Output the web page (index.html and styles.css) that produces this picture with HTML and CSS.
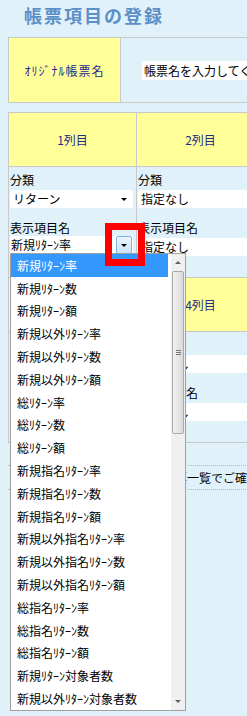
FILE: index.html
```html
<!DOCTYPE html>
<html>
<head>
  <link rel="stylesheet" href="styles.css">
</head>
<body>
  <div class="page">
    <h1 class="title">帳票項目の登録</h1>

    <!-- 帳票名 -->
    <div class="name-table">
      <div class="name-label">ｵﾘｼﾞﾅﾙ帳票名</div>
      <div class="name-field">
        <div class="text-input">帳票名を入力してください</div>
      </div>
    </div>

    <!-- 列の設定 -->
    <div class="columns">
      <div class="col-head">1列目</div>
      <div class="col-head">2列目</div>

      <div class="col-body">
        <div class="field-label">分類</div>
        <div class="select"><span>リターン</span><i class="caret"></i></div>
        <div class="field-label label-gap">表示項目名</div>
        <div class="select open"><span>新規ﾘﾀｰﾝ率</span><i class="drop-btn"><i class="caret"></i></i></div>
      </div>
      <div class="col-body">
        <div class="field-label">分類</div>
        <div class="select"><span>指定なし</span><i class="caret"></i></div>
        <div class="field-label label-gap">表示項目名</div>
        <div class="select"><span>指定なし</span><i class="caret"></i></div>
      </div>

      <div class="col-head">3列目</div>
      <div class="col-head">4列目</div>

      <div class="col-body">
        <div class="field-label">分類</div>
        <div class="select"><span>指定なし</span><i class="caret"></i></div>
        <div class="field-label label-gap">表示項目名</div>
        <div class="select"><span>指定なし</span><i class="caret"></i></div>
      </div>
      <div class="col-body">
        <div class="field-label">分類</div>
        <div class="select"><span>指定なし</span><i class="caret"></i></div>
        <div class="field-label label-gap">表示項目名</div>
        <div class="select"><span>指定なし</span><i class="caret"></i></div>
      </div>
    </div>

    <div class="note">※作成した帳票は帳票一覧でご確認ください。</div>

    <!-- 開いているドロップダウン -->
    <div class="dropdown-list">
      <ul class="options">
        <li class="selected">新規ﾘﾀｰﾝ率</li>
        <li>新規ﾘﾀｰﾝ数</li>
        <li>新規ﾘﾀｰﾝ額</li>
        <li>新規以外ﾘﾀｰﾝ率</li>
        <li>新規以外ﾘﾀｰﾝ数</li>
        <li>新規以外ﾘﾀｰﾝ額</li>
        <li>総ﾘﾀｰﾝ率</li>
        <li>総ﾘﾀｰﾝ数</li>
        <li>総ﾘﾀｰﾝ額</li>
        <li>新規指名ﾘﾀｰﾝ率</li>
        <li>新規指名ﾘﾀｰﾝ数</li>
        <li>新規指名ﾘﾀｰﾝ額</li>
        <li>新規以外指名ﾘﾀｰﾝ率</li>
        <li>新規以外指名ﾘﾀｰﾝ数</li>
        <li>新規以外指名ﾘﾀｰﾝ額</li>
        <li>総指名ﾘﾀｰﾝ率</li>
        <li>総指名ﾘﾀｰﾝ数</li>
        <li>総指名ﾘﾀｰﾝ額</li>
        <li>新規ﾘﾀｰﾝ対象者数</li>
        <li>新規以外ﾘﾀｰﾝ対象者数</li>
      </ul>
      <div class="scrollbar">
        <div class="sb-btn"><i class="sb-up"></i></div>
        <div class="sb-thumb"><i class="grip"></i></div>
        <div class="sb-track"></div>
        <div class="sb-btn"><i class="sb-down"></i></div>
      </div>
    </div>

    <!-- 注目枠 -->
    <div class="highlight-box"></div>
  </div>
</body>
</html>
```

FILE: styles.css
```css
* {
  margin: 0;
  padding: 0;
  box-sizing: border-box;
}

html, body {
  overflow: hidden;
}

body {
  background: #e1f1fa;
  font-family: "Noto Sans CJK JP", sans-serif;
  font-size: 12px;
  color: #000;
}

.page {
  position: relative;
  width: 247px;
  height: 716px;
}

/* タイトル */
.title {
  height: 37px;
  padding-left: 24px;
  font-size: 18px;
  line-height: 30px;
  letter-spacing: 2px;
  font-weight: bold;
  color: #5b8fc6;
}

/* 帳票名 */
.name-table {
  display: grid;
  grid-template-columns: 112px 300px;
  width: max-content;
  margin-left: 8px;
  border-top: 1px solid #c8c8c8;
  border-bottom: 1px solid #c8c8c8;
  border-left: 1px solid #c8c8c8;
}

.name-label {
  height: 64px;
  background: #ffff99;
  border-right: 1px solid #c8c8c8;
  color: #1f2a8c;
  letter-spacing: 1px;
  display: flex;
  align-items: center;
  justify-content: center;
}

.name-field {
  display: flex;
  align-items: center;
  padding-left: 21px;
}

.text-input {
  width: 220px;
  height: 19px;
  line-height: 19px;
  padding-left: 2px;
  background: #fff;
  white-space: nowrap;
  overflow: hidden;
}

/* 列 */
.columns {
  display: grid;
  grid-template-columns: 128px 128px;
  width: max-content;
  margin: 9px 0 0 8px;
  border-top: 1px solid #c8c8c8;
  border-left: 1px solid #c8c8c8;
}

.col-head {
  height: 54px;
  background: #ffff99;
  color: #1f2a8c;
  border-right: 1px solid #c8c8c8;
  border-bottom: 1px solid #c8c8c8;
  display: flex;
  align-items: center;
  justify-content: center;
}

.col-body {
  height: 111px;
  padding: 5px 3px 0 1px;
  border-right: 1px solid #c8c8c8;
  border-bottom: 1px solid #c8c8c8;
}

.field-label {
  line-height: 16px;
  height: 16px;
}

.label-gap {
  margin-top: 12px;
}

.select {
  position: relative;
  margin-top: 2px;
  width: 123px;
  height: 18px;
  line-height: 18px;
  padding-left: 3px;
  background: #fff;
  border-radius: 2px;
  white-space: nowrap;
}

.select .caret {
  position: absolute;
  right: 6px;
  top: 8px;
  border-left: 3px solid transparent;
  border-right: 3px solid transparent;
  border-top: 3px solid #000;
}

.select.open {
  margin-top: 0;
  padding-left: 1px;
}

.drop-btn {
  position: absolute;
  right: 1px;
  top: 0;
  width: 16px;
  height: 18px;
  border: 1px solid #7eb4ea;
  border-radius: 2px;
  background: linear-gradient(#ecf4fc, #cbe4fc);
}

.drop-btn .caret {
  right: 4px;
  top: 7px;
}

/* 注意書き */
.note {
  margin: 22px 0 0 8px;
  width: 400px;
  height: 25px;
  line-height: 23px;
  padding-left: 59px;
  border-top: 1px dotted #b8b8b8;
  border-bottom: 1px dotted #b8b8b8;
  white-space: nowrap;
}

/* ドロップダウン */
.dropdown-list {
  position: absolute;
  left: 10px;
  top: 253px;
  width: 176px;
  height: 458px;
  background: #fff;
  border: 1px solid #a0a0a0;
  display: flex;
}

.options {
  list-style: none;
  width: 157px;
  margin-right: 3px;
  display: flex;
  flex-direction: column;
}

.options li {
  flex: 1;
  display: flex;
  align-items: center;
  padding-left: 6px;
  white-space: nowrap;
}

.options li.selected {
  background: #3399ff;
  color: #fff;
}

.scrollbar {
  width: 14px;
  background: #f0f0f0;
  display: flex;
  flex-direction: column;
}

.sb-btn {
  height: 17px;
  display: flex;
  align-items: center;
  justify-content: center;
}

.sb-up {
  border-left: 3px solid transparent;
  border-right: 3px solid transparent;
  border-bottom: 3px solid #606060;
}

.sb-down {
  border-left: 3px solid transparent;
  border-right: 3px solid transparent;
  border-top: 3px solid #606060;
}

.sb-thumb {
  height: 163px;
  margin: 0 1px;
  border: 1px solid #a8a8a8;
  border-radius: 2px;
  background: linear-gradient(to right, #f2f2f2, #dadada);
  display: flex;
  align-items: center;
  justify-content: center;
}

.grip {
  width: 5px;
  height: 5px;
  border-top: 1px solid #777;
  border-bottom: 1px solid #777;
  position: relative;
}

.grip::after {
  content: "";
  position: absolute;
  left: 0;
  right: 0;
  top: 1px;
  border-top: 1px solid #777;
}

.sb-track {
  flex: 1;
}

/* 赤枠 */
.highlight-box {
  position: absolute;
  left: 105px;
  top: 223px;
  width: 40px;
  height: 43px;
  border: 7px solid #ff0000;
}
```
